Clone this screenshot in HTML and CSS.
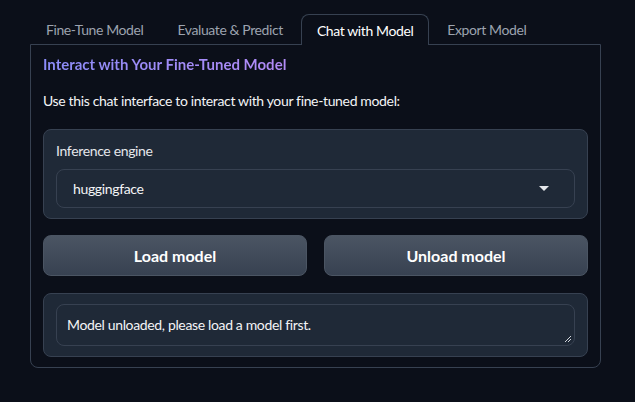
FILE: index.html
```html
<!DOCTYPE html>
<html>
<head>
<meta charset="utf-8">
<link rel="stylesheet" href="styles.css">
</head>
<body>
<div class="app">
  <div class="tabs">
    <button class="tab">Fine-Tune Model</button>
    <button class="tab">Evaluate &amp; Predict</button>
    <button class="tab selected">Chat with Model</button>
    <button class="tab">Export Model</button>
  </div>
  <div class="panel">
    <h2 class="title">Interact with Your Fine-Tuned Model</h2>
    <p class="desc">Use this chat interface to interact with your fine-tuned model:</p>
    <div class="block">
      <label class="label">Inference engine</label>
      <div class="select">
        <span>huggingface</span>
        <svg class="caret" width="10" height="6" viewBox="0 0 10 6"><path d="M0 0H10L5 5Z" fill="#e5e7eb"/></svg>
      </div>
    </div>
    <div class="buttons">
      <button class="btn">Load model</button>
      <button class="btn">Unload model</button>
    </div>
    <div class="block status">
      <div class="textarea">Model unloaded, please load a model first.
        <svg class="grip" width="8" height="8" viewBox="0 0 8 8"><path d="M7 1L1 7M7 4L4 7" stroke="#d1d5db" stroke-width="1"/></svg>
      </div>
    </div>
  </div>
</div>
</body>
</html>
```
FILE: styles.css
```css
html, body {
  margin: 0;
  padding: 0;
  background: #0b0f19;
}
body {
  font-family: "Lato", "Liberation Sans", sans-serif;
  color: #f3f4f6;
  font-size: 14px;
  letter-spacing: -0.35px;
}
.app {
  padding: 14px 34px 0 30px;
}
.tabs {
  display: flex;
  height: 30px;
}
.tab {
  background: transparent;
  border: 1px solid transparent;
  border-bottom: none;
  color: #9ca3af;
  font-family: inherit;
  font-size: 14px;
  letter-spacing: -0.4px;
  padding: 0 15px;
  margin-right: 2px;
  border-radius: 8px 8px 0 0;
  height: 30px;
  position: relative;
  z-index: 1;
}
.tab.selected {
  color: #ffffff;
  border-color: #374151;
  background: #0b0f19;
  height: 31px;
}
.panel {
  border: 1px solid #374151;
  border-radius: 0 0 8px 8px;
  padding: 8px 12px 10px 12px;
  display: flex;
  flex-direction: column;
}
.title {
  margin: 0;
  font-size: 15px;
  font-weight: 700;
  letter-spacing: 0;
  line-height: 22px;
  background: linear-gradient(90deg, #8b8cf8, #b38bf7);
  -webkit-background-clip: text;
  background-clip: text;
  color: transparent;
  align-self: flex-start;
}
.desc {
  margin: 16px 0 18px 0;
  line-height: 20px;
  color: #f3f4f6;
}
.block {
  background: #1f2937;
  border: 1px solid #374151;
  border-radius: 8px;
  padding: 11px 12px 10px 12px;
}
.label {
  display: block;
  color: #e5e7eb;
  line-height: 20px;
  margin-bottom: 8px;
}
.select {
  height: 39px;
  box-sizing: border-box;
  border: 1px solid #374151;
  border-radius: 8px;
  display: flex;
  align-items: center;
  justify-content: space-between;
  padding: 0 25px 0 16px;
  color: #f3f4f6;
}
.buttons {
  display: flex;
  gap: 17px;
  margin: 16px 0 17px 0;
}
.btn {
  flex: 1;
  height: 41px;
  border: 1px solid #4b5563;
  border-radius: 8px;
  background: linear-gradient(180deg, #4b5563, #374151);
  color: #ffffff;
  font-family: inherit;
  font-size: 16px;
  font-weight: 700;
  letter-spacing: 0;
}
.status {
  padding: 10px 12px 10px 12px;
}
.textarea {
  position: relative;
  height: 42px;
  box-sizing: border-box;
  border: 1px solid #374151;
  border-radius: 8px;
  padding: 11px 10px;
  line-height: 18px;
  color: #f3f4f6;
  font-size: 14px;
  letter-spacing: -0.35px;
}
.grip {
  position: absolute;
  right: 2px;
  bottom: 2px;
}
```
